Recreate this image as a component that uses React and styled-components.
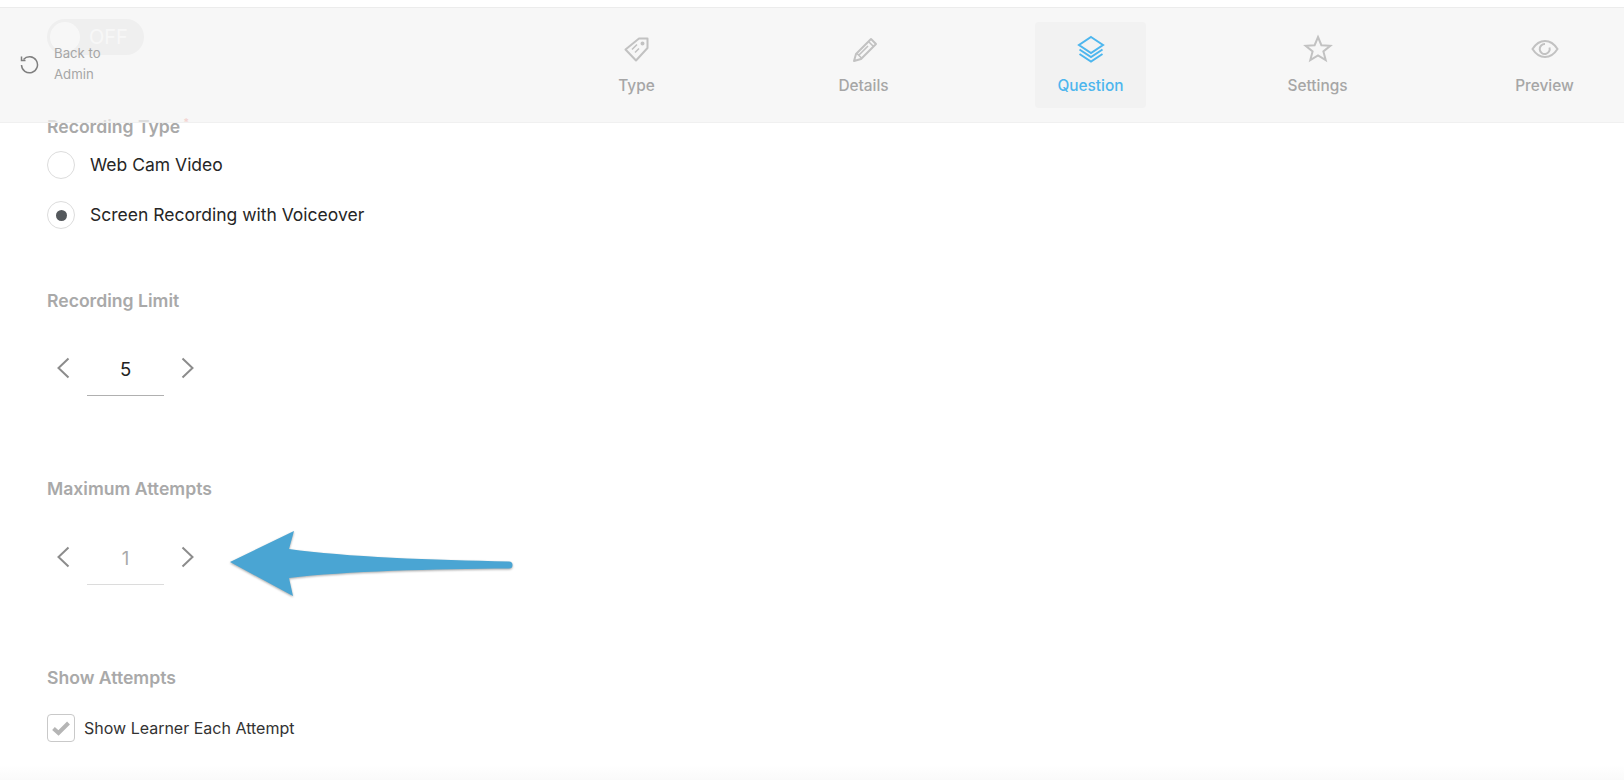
import React from 'react'
import styled, { createGlobalStyle } from 'styled-components'

const GlobalStyle = createGlobalStyle`
	html, body {
		margin: 0;
		padding: 0;
		background: #fff;
		font-family: Inter, "Liberation Sans", sans-serif;
	}
`

const Page = styled.div`
	position: relative;
	width: 1624px;
	height: 780px;
	overflow: hidden;
	display: flex;
	flex-direction: column;
`

const Header = styled.header`
	position: absolute;
	top: 7px;
	left: 0;
	right: 0;
	height: 116px;
	box-sizing: border-box;
	border-top: 1px solid #ececec;
	border-bottom: 1px solid #f0f0f0;
	background: rgba(244, 244, 244, 0.7);
	display: flex;
	align-items: flex-start;
	padding: 14px 24px 0 19px;
`

const BackLink = styled.div`
	display: flex;
	align-items: center;
	gap: 15px;
	margin-top: 21px;
	color: #a6a6a6;
	font-size: 13.2px;
	line-height: 21px;
	width: 90px;
`

const Nav = styled.nav`
	margin-left: auto;
	display: flex;
	gap: 116px;
`

const NavItem = styled.div`
	width: 111px;
	height: 86px;
	box-sizing: border-box;
	border-radius: 4px;
	padding-top: 12px;
	display: flex;
	flex-direction: column;
	align-items: center;
	gap: 12px;
	background: ${p => (p.$active ? '#f2f2f2' : 'transparent')};
	color: ${p => (p.$active ? '#4db6ee' : '#a6a6a6')};
	font-size: 15.4px;
	font-weight: 500;
	line-height: 20px;
`

const NavIcon = styled.svg`
	width: 30px;
	height: 30px;
	fill: none;
	stroke: ${p => (p.$active ? '#4db6ee' : '#c2c2c2')};
	stroke-width: 2;
`

const Content = styled.main`
	flex: 1;
	padding: 19px 47px 0;
	display: flex;
	flex-direction: column;
	align-items: flex-start;
`

const Toggle = styled.div`
	width: 97px;
	height: 36px;
	border-radius: 18px;
	background: #e3e3e3;
	display: flex;
	align-items: center;
	gap: 9px;
	padding-left: 3px;
	box-sizing: border-box;
	color: #fff;
	font-size: 20px;
`

const Knob = styled.span`
	width: 30px;
	height: 30px;
	border-radius: 50%;
	background: #fff;
`

const Label = styled.div`
	color: #a9a9a9;
	font-size: 17.6px;
	font-weight: 600;
	line-height: 22px;
	margin-top: ${p => p.$top}px;
`

const Required = styled.sup`
	color: #f08a80;
	font-size: 11px;
	line-height: 0;
	margin-left: 3px;
`

const RadioRow = styled.div`
	display: flex;
	align-items: center;
	gap: 15px;
	margin-top: ${p => p.$top}px;
	color: #262626;
	font-size: 17.5px;
	line-height: 28px;
`

const Radio = styled.span`
	width: 28px;
	height: 28px;
	box-sizing: border-box;
	border: 1px solid #dcdcdc;
	border-radius: 50%;
	background: #fff;
	display: flex;
	align-items: center;
	justify-content: center;

	&::after {
		content: '';
		width: 11px;
		height: 11px;
		border-radius: 50%;
		background: ${p => (p.$checked ? '#54585c' : 'transparent')};
	}
`

const Stepper = styled.div`
	display: flex;
	align-items: flex-start;
	margin-top: ${p => p.$top}px;
	margin-left: 9px;
`

const Chevron = styled.svg`
	width: 14px;
	height: 24px;
	margin-top: 6px;
	fill: none;
	stroke: #8c8c8c;
	stroke-width: 2;
`

const StepValue = styled.div`
	width: 77px;
	height: 46px;
	margin: 0 17px;
	box-sizing: border-box;
	text-align: center;
	font-size: 18.5px;
	line-height: 39px;
	color: ${p => (p.$muted ? '#a9a9a9' : '#222')};
	border-bottom: 1px solid ${p => (p.$muted ? '#dcdcdc' : '#b0b0b0')};
`

const CheckRow = styled.div`
	display: flex;
	align-items: center;
	gap: 9px;
	margin-top: 25px;
	color: #333;
	font-size: 16px;
	line-height: 28px;
`

const CheckBox = styled.span`
	width: 28px;
	height: 28px;
	box-sizing: border-box;
	border: 1px solid #c9c9c9;
	border-radius: 4px;
	display: flex;
	align-items: center;
	justify-content: center;
`

const FooterFade = styled.div`
	height: 15px;
	background: linear-gradient(#fff, #fafafa);
`

const CalloutArrow = styled.svg`
	position: absolute;
	left: 225px;
	top: 525px;
	width: 295px;
	height: 78px;
	filter: drop-shadow(0 1px 1px rgba(0, 0, 0, 0.35));
`

const icons = {
	Type: (
		<>
			<path d="M17 4.5h8.5V14L14 26.500 3.500 15.500z" strokeLinejoin="round" />
			<circle cx="20.500" cy="9.500" r="1" />
			<path d="M10 15.500l5-5M13 18.500l4-4" strokeWidth="1.6" />
		</>
	),
	Details: (
		<>
			<path d="M5 27l2-7L22 5l5 5-15 15z" strokeLinejoin="round" />
			<path d="M19.500 7.500l5 5M8 19.500l4.500 4.500M10 21l9-9" strokeWidth="1.6" />
		</>
	),
	Question: (
		<>
			<path d="M15 3L27 11 15 19 3 11z" strokeLinejoin="miter" />
			<path d="M3.500 15.500L15 23l11.500-7.500M3.500 20L15 27.500 26.500 20" />
		</>
	),
	Settings: <path d="M15 3l3.400 8.200 8.900.6-6.900 5.600 2.300 8.600-7.700-4.700-7.700 4.700 2.300-8.600-6.900-5.600 8.900-.6z" strokeLinejoin="miter" />,
	Preview: (
		<>
			<path d="M2.500 15C6 9.500 10 7 15 7s9 2.500 12.500 8C24 20.500 20 23 15 23S6 20.500 2.500 15z" />
			<path d="M19.500 13.500A5 5 0 1 1 15 10" />
		</>
	),
}

const steps = ['Type', 'Details', 'Question', 'Settings', 'Preview']

const StepperField = ({ value, muted, top }) => (
	<Stepper $top={top}>
		<Chevron viewBox="0 0 14 24">
			<path d="M12.500 2.500L2.500 12l10 9.500" />
		</Chevron>
		<StepValue $muted={muted}>{value}</StepValue>
		<Chevron viewBox="0 0 14 24">
			<path d="M1.500 2.500L11.500 12l-10 9.500" />
		</Chevron>
	</Stepper>
)

const App = () => {
	return (
		<Page>
			<GlobalStyle />

			<Content>
				<Toggle>
					<Knob />
					OFF
				</Toggle>

				<Label $top={61}>
					Recording Type<Required>*</Required>
				</Label>
				<RadioRow $top={13}>
					<Radio />
					Web Cam Video
				</RadioRow>
				<RadioRow $top={22}>
					<Radio $checked />
					Screen Recording with Voiceover
				</RadioRow>

				<Label $top={61}>Recording Limit</Label>
				<StepperField value="5" top={38} />

				<Label $top={82}>Maximum Attempts</Label>
				<StepperField value="1" muted top={39} />

				<Label $top={82}>Show Attempts</Label>
				<CheckRow>
					<CheckBox>
						<svg width="20" height="16" viewBox="0 0 20 16">
							<path d="M2.500 8.500L7.500 13 17.500 3" fill="none" stroke="#b5b5b5" strokeWidth="4" />
						</svg>
					</CheckBox>
					Show Learner Each Attempt
				</CheckRow>
			</Content>
			<FooterFade />

			<Header>
				<BackLink>
					<svg width="20" height="20" viewBox="0 0 20 20" fill="none" stroke="#7f7f7f" strokeWidth="1.500" style={{ flexShrink: 0 }}>
						<path d="M4.500 5.500A8 8 0 1 1 2.500 11" />
						<path d="M2.500 2.500v4h4" />
					</svg>
					<span>
						Back to
						<br />
						Admin
					</span>
				</BackLink>
				<Nav>
					{steps.map(step => (
						<NavItem key={step} $active={step === 'Question'}>
							<NavIcon viewBox="0 0 30 30" $active={step === 'Question'}>
								{icons[step]}
							</NavIcon>
							{step}
						</NavItem>
					))}
				</Nav>
			</Header>

			<CalloutArrow viewBox="0 0 295 78">
				<path
					d="M5 37L69 6 64 24C120 32 210 35 284 36.500a3.500 3.500 0 0 1 0 7C210 44 120 46 64 53L68 71z"
					fill="#4aa5d3"
				/>
			</CalloutArrow>
		</Page>
	)
}

export default App
